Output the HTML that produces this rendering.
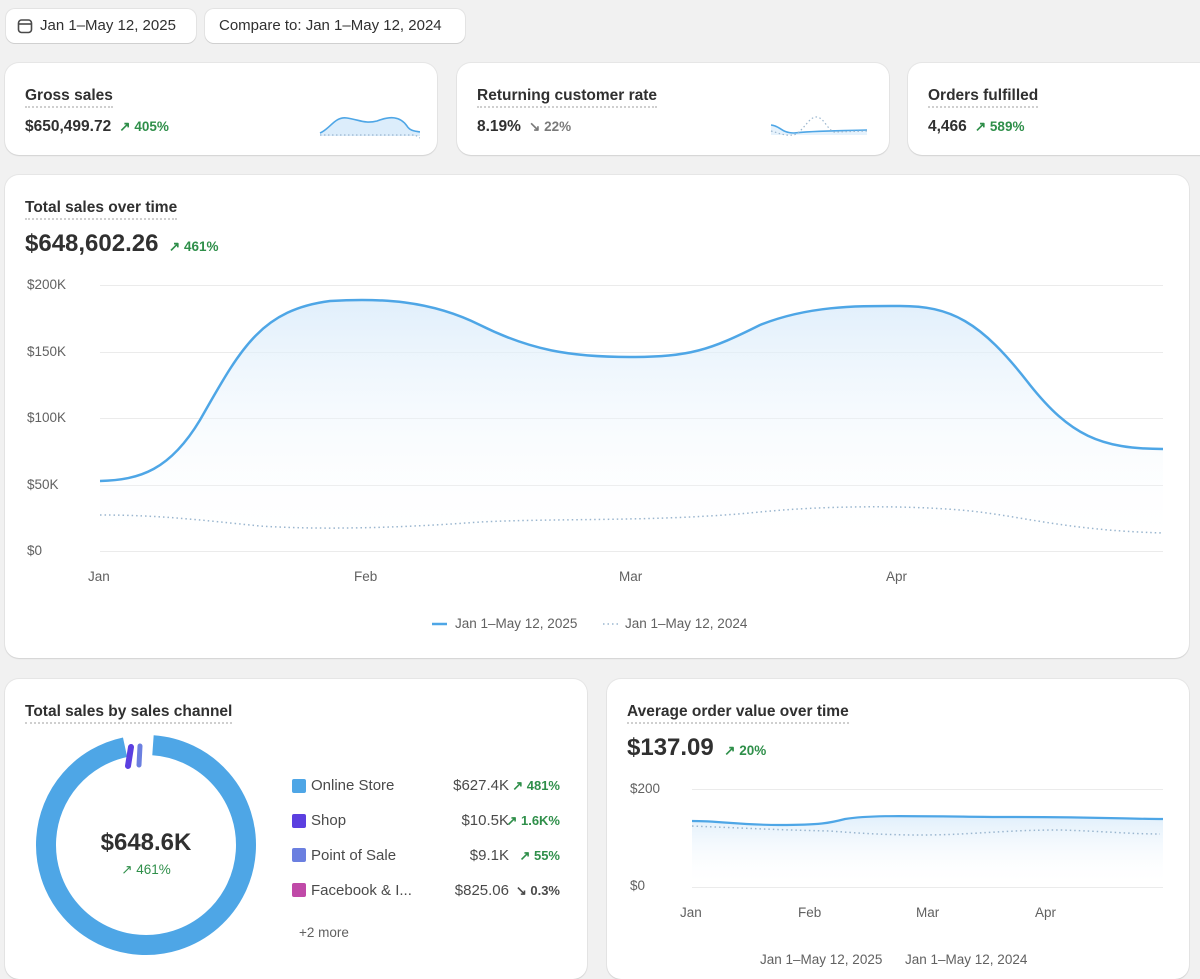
<!DOCTYPE html>
<html><head><meta charset="utf-8"><style>
*{box-sizing:border-box;margin:0;padding:0}
body{width:1200px;height:957px;overflow:hidden;background:#f1f1f1;font-family:"Liberation Sans",sans-serif;color:#303030;position:relative}
.btn{position:absolute;top:9px;height:34px;background:#fff;border-radius:9px;box-shadow:0 1px 0 #d0d0d0,0 0 0 1px #e3e3e3;font-size:15px;line-height:34px;color:#303030}
.card{position:absolute;background:#fff;border-radius:14px;box-shadow:0 1px 1px #d4d4d4,0 0 0 1px #e6e6e6}
.t{position:absolute;font-size:15.5px;font-weight:bold;color:#303030;border-bottom:2px dotted #cfcfcf;padding-bottom:1px;white-space:nowrap}
.v{position:absolute;font-size:15.5px;font-weight:bold;color:#303030;white-space:nowrap}
.g{color:#2f8f4a;font-size:13.5px;font-weight:bold}
.gr{color:#7a7a7a;font-size:13.5px;font-weight:bold}
.ax{position:absolute;font-size:13.5px;color:#616161}
</style></head><body>
<div class="btn" style="left:6px;width:190px;padding-left:34px">Jan 1–May 12, 2025
<svg style="position:absolute;left:11px;top:9px" width="16" height="16" viewBox="0 0 16 16"><rect x="1.5" y="2" width="13" height="12.5" rx="3" fill="none" stroke="#4a4a4a" stroke-width="1.6"/><line x1="1.5" y1="6" x2="14.5" y2="6" stroke="#4a4a4a" stroke-width="1.6"/></svg></div>
<div class="btn" style="left:205px;width:260px;padding-left:14px">Compare to: Jan 1–May 12, 2024</div>

<div class="card" style="left:5px;top:63px;width:432px;height:92px">
<div class="t" style="left:20px;top:24px">Gross sales</div>
<div class="v" style="left:20px;top:55px">$650,499.72 <span class="g">&nbsp;↗ 405%</span></div>
<svg style="position:absolute;left:310px;top:48px" width="105" height="30"><path d="M5 22 C15 18,20 5,32 7 C45 9,50 13,62 10 C75 5,85 5,92 15 C95 20,100 20,105 21 L105 25 L5 25Z" fill="#dcedfb"/><path d="M5 22 C15 18,20 5,32 7 C45 9,50 13,62 10 C75 5,85 5,92 15 C95 20,100 20,105 21" fill="none" stroke="#4ea6e6" stroke-width="1.6"/><path d="M5 24 L100 24 L105 27" fill="none" stroke="#9ab6cf" stroke-width="1.2" stroke-dasharray="1.5 2.5"/></svg>
</div>
<div class="card" style="left:457px;top:63px;width:432px;height:92px">
<div class="t" style="left:20px;top:24px">Returning customer rate</div>
<div class="v" style="left:20px;top:55px">8.19% <span class="gr">&nbsp;↘ 22%</span></div>
<svg style="position:absolute;left:312px;top:48px" width="100" height="30"><path d="M2 14 C12 15,12 22,25 22 C40 20,60 20,98 19 L98 24 L2 24Z" fill="#e6f2fc"/><path d="M2 14 C12 15,12 22,25 22 C40 20,60 20,98 19" fill="none" stroke="#4ea6e6" stroke-width="1.6"/><path d="M2 20 C10 22,15 25,25 24 C35 20,40 5,48 6 C55 7,58 18,65 21 L98 20" fill="none" stroke="#9ab6cf" stroke-width="1.2" stroke-dasharray="1.5 2.5"/></svg>
</div>
<div class="card" style="left:908px;top:63px;width:310px;height:92px">
<div class="t" style="left:20px;top:24px">Orders fulfilled</div>
<div class="v" style="left:20px;top:55px">4,466 <span class="g">&nbsp;↗ 589%</span></div>
</div>

<div class="card" style="left:5px;top:175px;width:1184px;height:483px">
<div class="t" style="left:20px;top:24px">Total sales over time</div>
<div class="v" style="left:20px;top:55px;font-size:24px">$648,602.26 <span class="g">&nbsp;↗ 461%</span></div>
</div>
<svg style="position:absolute;left:0;top:0" width="1200" height="957">
<defs><linearGradient id="gf" x1="0" y1="0" x2="0" y2="1"><stop offset="0" stop-color="#d9ebfa" stop-opacity=".8"/><stop offset="1" stop-color="#fff" stop-opacity="0"/></linearGradient></defs>
<g stroke="#ebebeb" stroke-width="1"><line x1="100" y1="285.5" x2="1163" y2="285.5"/><line x1="100" y1="352.5" x2="1163" y2="352.5"/><line x1="100" y1="418.5" x2="1163" y2="418.5"/><line x1="100" y1="485.5" x2="1163" y2="485.5"/><line x1="100" y1="551.5" x2="1163" y2="551.5"/></g>
<path d="M100 481 C140 480,170 470,200 420 C240 350,260 310,330 301 C380 298,430 300,480 325 C530 350,570 357,630 357 C690 357,710 350,760 325 C810 305,860 306,900 306 C950 306,980 320,1030 385 C1070 435,1100 449,1163 449 L1163 551 L100 551Z" fill="url(#gf)"/>
<path d="M100 481 C140 480,170 470,200 420 C240 350,260 310,330 301 C380 298,430 300,480 325 C530 350,570 357,630 357 C690 357,710 350,760 325 C810 305,860 306,900 306 C950 306,980 320,1030 385 C1070 435,1100 449,1163 449" fill="none" stroke="#4ea6e6" stroke-width="2.5"/>
<path d="M100 515 C160 515,200 520,260 526 C320 530,400 528,480 522 C560 518,660 522,760 512 C820 506,900 505,960 510 C1020 515,1060 530,1163 533" fill="none" stroke="#9ab6cf" stroke-width="1.5" stroke-dasharray="1.5 3"/>
<line x1="432" y1="624" x2="447" y2="624" stroke="#4ea6e6" stroke-width="2.5"/>
<line x1="603" y1="624" x2="618" y2="624" stroke="#9ab6cf" stroke-width="1.5" stroke-dasharray="1.5 3"/>
</svg>
<div class="ax" style="left:27px;top:277px">$200K</div>
<div class="ax" style="left:27px;top:344px">$150K</div>
<div class="ax" style="left:27px;top:410px">$100K</div>
<div class="ax" style="left:27px;top:477px">$50K</div>
<div class="ax" style="left:27px;top:543px">$0</div>
<div class="ax" style="left:88px;top:569px">Jan</div>
<div class="ax" style="left:354px;top:569px">Feb</div>
<div class="ax" style="left:619px;top:569px">Mar</div>
<div class="ax" style="left:886px;top:569px">Apr</div>
<div class="ax" style="left:455px;top:616px">Jan 1–May 12, 2025</div>
<div class="ax" style="left:625px;top:616px">Jan 1–May 12, 2024</div>

<div class="card" style="left:5px;top:679px;width:582px;height:300px">
<div class="t" style="left:20px;top:24px">Total sales by sales channel</div>
</div>
<svg style="position:absolute;left:0;top:0" width="600" height="957">
<circle cx="146" cy="845" r="100" fill="none" stroke="#4ea6e6" stroke-width="20" stroke-dasharray="600 28.3" transform="rotate(-86 146 845)"/>
<path d="M131 747 L128 766" stroke="#5b3fe0" stroke-width="6" stroke-linecap="round"/>
<path d="M140 746 L139 765" stroke="#6b7fe0" stroke-width="5" stroke-linecap="round"/>
<rect x="292" y="779" width="14" height="14" rx="2" fill="#4ea6e6"/>
<rect x="292" y="814" width="14" height="14" rx="2" fill="#5b3fe0"/>
<rect x="292" y="848" width="14" height="14" rx="2" fill="#6b7fe0"/>
<rect x="292" y="883" width="14" height="14" rx="2" fill="#c04aa8"/>
</svg>
<div class="v" style="left:46px;width:200px;text-align:center;top:829px;font-size:24px">$648.6K</div>
<div class="g" style="position:absolute;left:46px;width:200px;text-align:center;top:862px;font-weight:normal">↗ 461%</div>
<div style="position:absolute;left:311px;top:768px;font-size:15px;color:#4a4a4a;line-height:35px">Online Store<br>Shop<br>Point of Sale<br>Facebook &amp; I...</div>
<div style="position:absolute;left:380px;width:129px;text-align:right;top:768px;font-size:15px;color:#4a4a4a;line-height:35px">$627.4K<br>$10.5K<br>$9.1K<br>$825.06</div>
<div style="position:absolute;left:500px;width:60px;text-align:right;top:768px;font-size:13px;line-height:35px;font-weight:bold;color:#2f8f4a">↗ 481%<br>↗ 1.6K%<br>↗ 55%<br><span style="color:#4a4a4a">↘ 0.3%</span></div>
<div style="position:absolute;left:299px;top:925px;font-size:13.5px;color:#616161">+2 more</div>

<div class="card" style="left:607px;top:679px;width:582px;height:300px">
<div class="t" style="left:20px;top:24px">Average order value over time</div>
<div class="v" style="left:20px;top:55px;font-size:24px">$137.09 <span class="g">&nbsp;↗ 20%</span></div>
</div>
<svg style="position:absolute;left:0;top:0" width="1200" height="957">
<g stroke="#ebebeb"><line x1="692" y1="789.5" x2="1163" y2="789.5"/><line x1="692" y1="887.5" x2="1163" y2="887.5"/></g>
<path d="M692 821 C720 821,740 825,780 825 C820 825,830 823,845 819 C870 815,900 816,1000 817 C1100 817,1130 819,1163 819 L1163 887 L692 887Z" fill="url(#gf)"/>
<path d="M692 821 C720 821,740 825,780 825 C820 825,830 823,845 819 C870 815,900 816,1000 817 C1100 817,1130 819,1163 819" fill="none" stroke="#4ea6e6" stroke-width="2.2"/>
<path d="M692 826 C740 828,780 830,830 831 C880 835,920 836,960 834 C1000 832,1020 830,1060 830 C1100 831,1130 834,1160 834" fill="none" stroke="#9ab6cf" stroke-width="1.5" stroke-dasharray="1.5 3"/>
</svg>
<div class="ax" style="left:630px;top:781px">$200</div>
<div class="ax" style="left:630px;top:878px">$0</div>
<div class="ax" style="left:680px;top:905px">Jan</div>
<div class="ax" style="left:798px;top:905px">Feb</div>
<div class="ax" style="left:916px;top:905px">Mar</div>
<div class="ax" style="left:1035px;top:905px">Apr</div>
<div class="ax" style="left:760px;top:952px">Jan 1–May 12, 2025</div>
<div class="ax" style="left:905px;top:952px">Jan 1–May 12, 2024</div>
</body></html>
